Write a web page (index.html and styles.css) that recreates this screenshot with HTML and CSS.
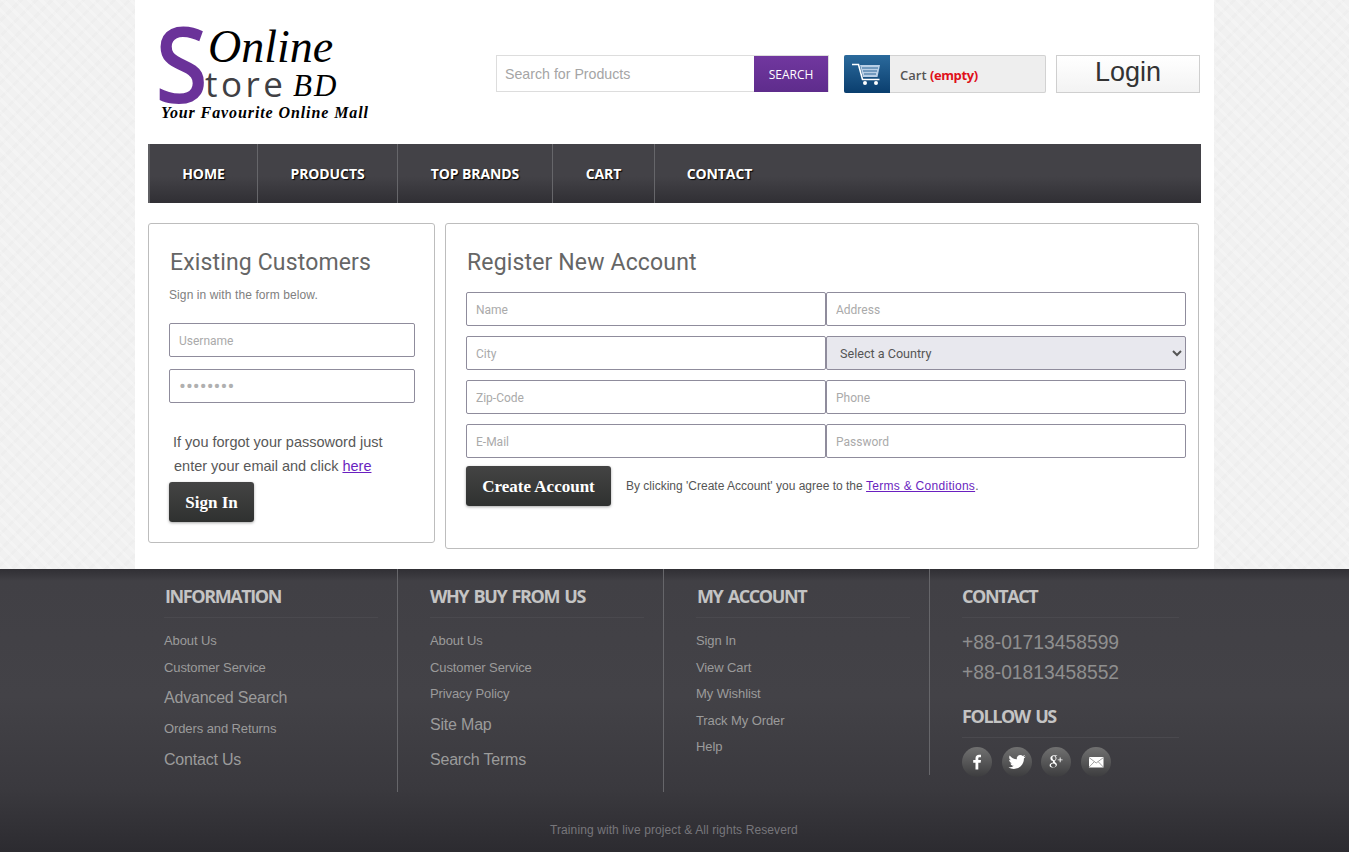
FILE: index.html
```html
<!DOCTYPE html>
<html lang="en">
<head>
<meta charset="utf-8">
<title>Online Store BD</title>
<link rel="stylesheet" href="styles.css">
</head>
<body>
<div class="wrap">
  <header class="top">
    <a class="logo" href="#">
      <span class="logo-s">S</span>
      <span class="logo-online">Online</span>
      <span class="logo-tore">tore</span>
      <span class="logo-bd">BD</span>
      <span class="logo-tag">Your Favourite Online Mall</span>
    </a>
    <form class="search">
      <input class="search-input" type="text" placeholder="Search for Products">
      <button class="search-btn" type="button">SEARCH</button>
    </form>
    <a class="cart" href="#">
      <span class="cart-icon">
        <svg width="32" height="24" viewBox="0 0 32 24">
          <path d="M1 2.5h6.5l4 15h17" fill="none" stroke="#fff" stroke-width="1.6"/>
          <path d="M9 3h20l-2.5 12H12z" fill="#b9cfe6"/>
          <path d="M11 6h16M12 9h14M13 12h12" stroke="#2a6496" stroke-width="1"/>
          <circle cx="14" cy="21" r="2" fill="#fff"/>
          <circle cx="25" cy="21" r="2" fill="#fff"/>
        </svg>
      </span>
      <span class="cart-text">Cart <b class="cart-empty">(empty)</b></span>
    </a>
    <a class="login" href="#">Login</a>
  </header>

  <nav class="nav">
    <a class="nav-item nav-home" href="#">HOME</a>
    <a class="nav-item nav-products" href="#">PRODUCTS</a>
    <a class="nav-item nav-brands" href="#">TOP BRANDS</a>
    <a class="nav-item nav-cart" href="#">CART</a>
    <a class="nav-item nav-contact" href="#">CONTACT</a>
  </nav>

  <main class="main">
    <section class="box box-login">
      <h2 class="box-title">Existing Customers</h2>
      <p class="box-sub">Sign in with the form below.</p>
      <input class="field field-login" type="text" placeholder="Username">
      <input class="field field-login field-pass" type="password" value="password">
      <p class="forgot">If you forgot your passoword just<br><span class="forgot-2">enter your email and click <a href="#">here</a></span></p>
      <button class="btn btn-sign" type="button">Sign In</button>
    </section>

    <section class="box box-register">
      <h2 class="box-title">Register New Account</h2>
      <div class="reg-grid">
        <input class="field" type="text" placeholder="Name">
        <input class="field" type="text" placeholder="Address">
        <input class="field" type="text" placeholder="City">
        <select class="field field-select"><option>Select a Country</option></select>
        <input class="field" type="text" placeholder="Zip-Code">
        <input class="field" type="text" placeholder="Phone">
        <input class="field" type="text" placeholder="E-Mail">
        <input class="field" type="text" placeholder="Password">
      </div>
      <div class="reg-actions">
        <button class="btn btn-create" type="button">Create Account</button>
        <p class="terms">By clicking 'Create Account' you agree to the <a href="#">Terms &amp; Conditions</a>.</p>
      </div>
    </section>
  </main>
</div>

<footer class="footer">
  <div class="foot-cols">
    <div class="foot-col">
      <h3 class="foot-h">INFORMATION</h3>
      <ul class="foot-list">
        <li><a href="#">About Us</a></li>
        <li><a href="#">Customer Service</a></li>
        <li class="big"><a href="#">Advanced Search</a></li>
        <li><a href="#">Orders and Returns</a></li>
        <li class="big"><a href="#">Contact Us</a></li>
      </ul>
    </div>
    <div class="foot-col">
      <h3 class="foot-h">WHY BUY FROM US</h3>
      <ul class="foot-list">
        <li><a href="#">About Us</a></li>
        <li><a href="#">Customer Service</a></li>
        <li><a href="#">Privacy Policy</a></li>
        <li class="big"><a href="#">Site Map</a></li>
        <li class="big"><a href="#">Search Terms</a></li>
      </ul>
    </div>
    <div class="foot-col foot-col-short">
      <h3 class="foot-h">MY ACCOUNT</h3>
      <ul class="foot-list">
        <li><a href="#">Sign In</a></li>
        <li><a href="#">View Cart</a></li>
        <li><a href="#">My Wishlist</a></li>
        <li><a href="#">Track My Order</a></li>
        <li><a href="#">Help</a></li>
      </ul>
    </div>
    <div class="foot-col foot-col-last">
      <h3 class="foot-h">CONTACT</h3>
      <p class="phones">+88-01713458599<br>+88-01813458552</p>
      <h3 class="foot-h foot-h-follow">FOLLOW US</h3>
      <div class="social">
        <a class="soc" href="#"><svg width="30" height="30" viewBox="0 0 30 30"><path d="M16.3 22.5v-6.7h2.3l.4-2.7h-2.7v-1.6c0-.8.3-1.3 1.4-1.3H19V7.8c-.3 0-1.1-.1-2-.1-2.1 0-3.5 1.2-3.5 3.5v1.9h-2.3v2.7h2.3v6.7z" fill="#fff"/></svg></a>
        <a class="soc soc-t" href="#"><svg width="30" height="30" viewBox="0 0 30 30"><path d="M23.5 9.4c-.6.3-1.3.5-2 .6.7-.4 1.3-1.1 1.5-1.9-.7.4-1.4.7-2.2.9-.6-.7-1.5-1.1-2.5-1.1-1.9 0-3.5 1.6-3.5 3.5 0 .3 0 .5.1.8-2.9-.1-5.5-1.5-7.2-3.7-.3.5-.5 1.1-.5 1.8 0 1.2.6 2.3 1.6 2.9-.6 0-1.1-.2-1.6-.4 0 1.7 1.2 3.1 2.8 3.5-.5.1-1 .2-1.6.1.4 1.4 1.7 2.4 3.3 2.4-1.5 1.2-3.2 1.7-5.2 1.5 1.6 1 3.4 1.6 5.4 1.6 6.5 0 10-5.4 10-10v-.5c.7-.5 1.3-1.1 1.7-1.9z" fill="#fff"/></svg></a>
        <a class="soc" href="#"><svg width="30" height="30" viewBox="0 0 30 30"><path d="M13 8.2c-2.2 0-3.6 1.4-3.6 3 0 1.5 1.1 2.7 2.7 2.7l-.3 1c0 .4.2.6.4.9-2 .1-3.6 1-3.6 2.6 0 1.4 1.5 2.2 3.4 2.2 2.4 0 3.9-1.4 3.9-2.8 0-1.9-2.2-2.4-2.2-3.3 0-.8 1.8-1.2 1.8-3.2 0-1-.5-1.7-1-2.2h1.1l.9-.7zm.3 5c-1.1 0-1.9-1.1-1.9-2.4 0-1 .5-1.8 1.4-1.8 1.1 0 1.8 1.2 1.8 2.4 0 1-.5 1.8-1.3 1.8zm-.7 3.4c1.3.4 2.1 1 2.1 2 0 1-.9 1.6-2.2 1.6-1.5 0-2.6-.8-2.6-1.9 0-1 1.2-1.7 2.7-1.7zM19.6 12.4v-2h-.9v2h-2v.9h2v2h.9v-2h2v-.9z" fill="#fff"/></svg></a>
        <a class="soc" href="#"><svg width="30" height="30" viewBox="0 0 30 30"><rect x="8" y="10" width="14.5" height="10.5" fill="#fff"/><path d="M8 10.5l7.2 5.5 7.3-5.5M8 20.2l5.3-5.5M22.5 20.2l-5.3-5.5" fill="none" stroke="#8a8a8a" stroke-width=".8"/></svg></a>
      </div>
    </div>
  </div>
  <p class="copy">Training with live project &amp; All rights Reseverd</p>
</footer>
</body>
</html>
```

FILE: styles.css
```css
* { box-sizing: border-box; }
html, body { margin: 0; padding: 0; }
body {
  height: 852px;
  overflow: hidden;
  font-family: "Liberation Sans", Arial, sans-serif;
  color: #555;
  background-color: #f1f1f1;
  background-image:
    repeating-linear-gradient(45deg, rgba(255,255,255,.22) 0 3px, transparent 3px 9px),
    repeating-linear-gradient(-45deg, rgba(228,228,228,.22) 0 3px, transparent 3px 11px);
}
a { color: #6a1fc0; }
ul { list-style: none; margin: 0; padding: 0; }
p, h2, h3 { margin: 0; }

.wrap {
  width: 1079px;
  height: 569px;
  margin-left: 135px;
  background: #fff;
  padding-left: 13px;
}

/* header */
.top { display: flex; align-items: flex-start; height: 144px; }
.logo {
  position: relative;
  display: block;
  width: 348px;
  height: 144px;
  flex: none;
  text-decoration: none;
}
.logo span { position: absolute; white-space: nowrap; }
.logo-s {
  left: 7px;
  top: 24px;
  font: 600 105px/78px "Open Sans", sans-serif;
  color: #6a3299;
  transform: scaleX(.92);
  transform-origin: left center;
}
.logo-online { left: 60px; top: 29px; font: italic 400 46px/36px "Liberation Serif", serif; color: #000; }
.logo-tore { left: 57px; top: 71px; font: 400 35px/26px "Open Sans", sans-serif; color: #404044; letter-spacing: 3.5px; }
.logo-bd { left: 145px; top: 74px; font: italic 400 31px/24px "Liberation Serif", serif; color: #000; letter-spacing: 2px; }
.logo-tag { left: 13px; top: 106px; font: italic 700 16px/14px "Liberation Serif", serif; color: #000; letter-spacing: .9px; }

.search {
  display: flex;
  width: 333px;
  height: 37px;
  margin: 55px 0 0;
  border: 1px solid #ddd;
  background: #fff;
}
.search-input {
  flex: 1;
  min-width: 0;
  border: 0;
  outline: 0;
  padding: 0 8px;
  font: 14.2px "Liberation Sans", Arial, sans-serif;
  color: #555;
  background: transparent;
}
.search-input::placeholder { color: #a5a5a5; opacity: 1; }
.search-btn {
  width: 74px;
  height: 36px;
  border: 0;
  padding: 0;
  font: 12px "Open Sans", sans-serif;
  color: #fff;
  background: linear-gradient(#71379f, #5e2c8c);
}
.cart {
  display: flex;
  width: 202px;
  height: 38px;
  margin: 55px 0 0 15px;
  border-radius: 2px;
  background: #eee;
  box-shadow: inset 0 0 0 1px #d2d2d2;
  text-decoration: none;
  overflow: hidden;
}
.cart-icon {
  width: 46px;
  display: flex;
  align-items: center;
  justify-content: center;
  background: linear-gradient(#2b6a9c, #0a3e6e);
  flex: none;
}
.cart-text { font: 600 13px/40px "Open Sans", sans-serif; color: #555; padding-left: 10px; }
.cart-empty { color: #e0101a; font-weight: 700; letter-spacing: -.4px; }
.login {
  display: block;
  width: 144px;
  height: 38px;
  margin: 55px 0 0 10px;
  border: 1px solid #cfcfcf;
  background: linear-gradient(#fff, #f3f3f3);
  text-align: center;
  font: 27px/33px "Liberation Sans", Arial, sans-serif;
  color: #333;
  text-decoration: none;
}

/* nav */
.nav {
  display: flex;
  width: 1053px;
  height: 59px;
  background: linear-gradient(#434247 0, #434247 55%, #302f34 100%);
  border-left: 2px solid #5f5f63;
}
.nav-item {
  display: block;
  border-right: 1px solid #66666a;
  font: 700 14px/59px "Open Sans", sans-serif;
  color: #fff;
  text-align: center;
  text-decoration: none;
  text-shadow: 1px 1px 1px #000;
  letter-spacing: -.1px;
}
.nav-home { width: 108px; }
.nav-products { width: 140px; }
.nav-brands { width: 155px; }
.nav-cart { width: 102px; }
.nav-contact { width: 129px; border-right: 0; }

/* main */
.main { display: flex; align-items: flex-start; gap: 10px; padding-top: 20px; }
.box { border: 1px solid #bdbdbd; border-radius: 3px; background: #fff; flex: none; }
.box-login { width: 287px; height: 320px; padding: 24px 20px 0; }
.box-register { width: 754px; height: 326px; padding: 24px 12px 0 20px; }
.box-title {
  font: 400 23px/30px "Roboto", sans-serif;
  color: #666;
  letter-spacing: .15px;
  padding-left: 1px;
}
.box-sub { font-size: 12px; line-height: 16px; letter-spacing: .1px; color: #808080; margin-top: 9px; }
.field {
  display: block;
  width: 100%;
  height: 34px;
  padding: 2px 9px 0;
  border: 1px solid #8f8c9c;
  border-radius: 2px;
  outline: 0;
  background: #fff;
  font: 12px "Roboto", sans-serif;
  color: #555;
}
.field::placeholder { color: #aaa; opacity: 1; }
.field-login { width: 246px; margin-top: 12px; }
.box-sub + .field-login { margin-top: 20px; }
.field-pass { color: #b0b0b0; font-size: 20.5px; padding-top: 0; }
.field-select {
  background: #e8e8ee;
  padding: 0 0 0 9px;
  color: #555;
  font-size: 12.6px;
}
.forgot { font-size: 14.5px; line-height: 24px; color: #585858; margin: 27px 0 0 4px; }
.forgot a { color: #6a1fc0; }
.forgot-2 { margin-left: 1px; }
.btn {
  display: block;
  height: 40px;
  padding: 1px 0 0;
  border: 0;
  border-radius: 3px;
  background: linear-gradient(#444, #2f3130);
  box-shadow: 0 1px 3px rgba(0,0,0,.35);
  color: #fff;
  font: 700 17px "Liberation Serif", serif;
  flex: none;
}
.btn-sign { width: 85px; margin-top: 4px; }
.btn-create { width: 145px; }
.reg-grid {
  display: grid;
  grid-template-columns: 360px 360px;
  row-gap: 10px;
  margin-top: 14px;
}
.reg-actions { display: flex; align-items: center; margin-top: 8px; }
.terms { font-size: 12px; color: #555; margin-left: 15px; }
.terms a { color: #6a1fc0; letter-spacing: .28px; }

/* footer */
.footer {
  position: relative;
  height: 283px;
  background: linear-gradient(#302f34 0, #414045 12px, #434247 45%, #3a393e 78%, #2c2b30 100%);
}
.foot-cols { display: flex; margin-left: 148px; align-items: flex-start; }
.foot-col {
  width: 266px;
  height: 223px;
  padding: 15px 19px 0 32px;
  border-right: 1px solid #66666a;
}
.foot-col:first-child { width: 250px; padding-left: 16px; }
.foot-col-short { height: 206px; }
.foot-col-last { border-right: 0; padding-right: 21px; width: 270px; }
.foot-h {
  font: 700 18px/25px "Open Sans", sans-serif;
  color: #c4c4c4;
  letter-spacing: -1.4px;
  word-spacing: 2px;
  padding: 0 0 8px 1px;
  border-bottom: 1px solid #4a494e;
}
.foot-col:nth-child(2) .foot-h, .foot-col-last .foot-h { padding-left: 0; }
.foot-list { margin-top: 10px; }
.foot-list li { height: 26.6px; font-size: 13px; line-height: 26.6px; letter-spacing: -.1px; }
.foot-list li.big { height: 35px; font-size: 16px; line-height: 34px; letter-spacing: -.2px; }
.foot-list a { color: #9b9b9b; text-decoration: none; }
.phones { font-size: 19.3px; line-height: 30px; color: #8f8f8f; margin-top: 10px; }
.foot-h-follow { margin-top: 16px; }
.social { display: flex; margin-top: 9px; }
.soc {
  display: block;
  width: 30px;
  height: 30px;
  margin-right: 9.5px;
  border-radius: 50%;
  background: linear-gradient(#717171, #3c3c3e);
}
.soc svg { display: block; }
.copy {
  position: absolute;
  left: 550px;
  top: 254px;
  font-size: 12px;
  letter-spacing: .1px;
  color: #77767b;
}
```
